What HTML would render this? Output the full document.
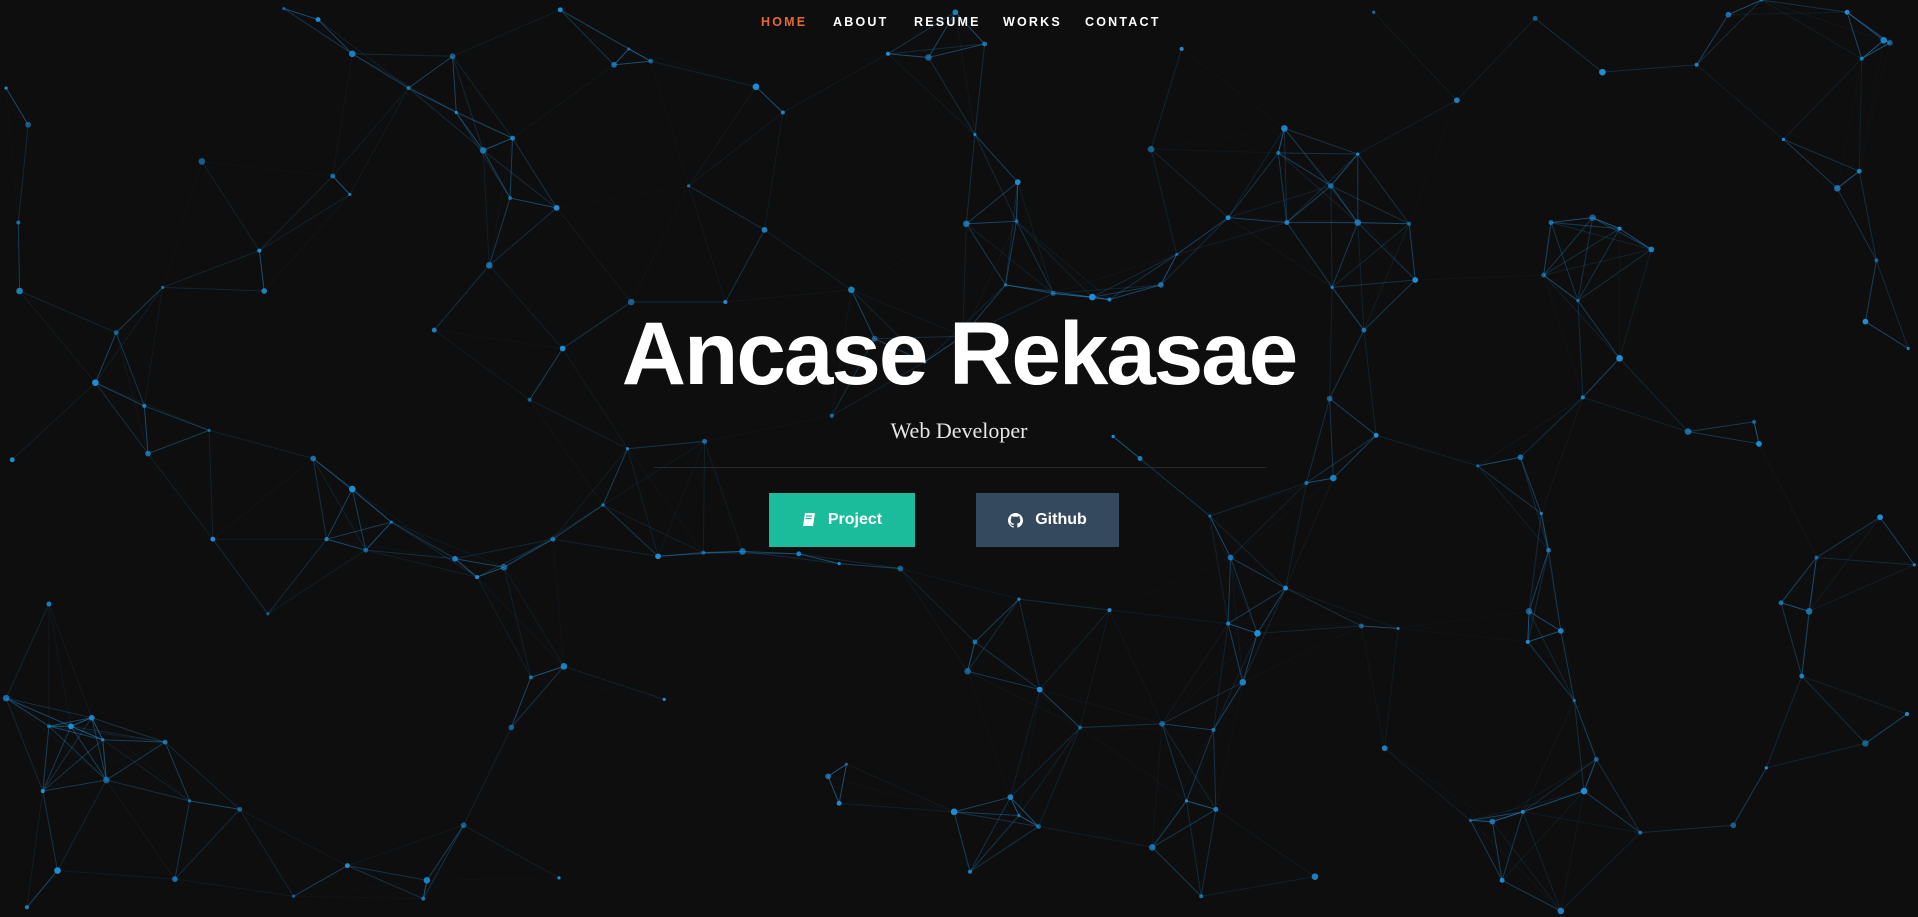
<!DOCTYPE html>
<html><head><meta charset="utf-8"><style>
html,body{margin:0;padding:0;width:1918px;height:917px;overflow:hidden;background:#0e0e0e;font-family:"Liberation Sans",sans-serif;}
#bg{position:absolute;left:0;top:0;width:1918px;height:917px;}
nav{position:absolute;top:15px;left:0;width:1918px;height:16px;}
nav a{position:absolute;top:0;font-size:12.5px;font-weight:bold;letter-spacing:2.2px;color:#fff;text-decoration:none;}
h1{position:absolute;left:0;width:1918px;top:298px;margin:0;text-align:center;color:#fff;font-size:89px;font-weight:bold;letter-spacing:-2px;line-height:110px;}
.sub{position:absolute;left:0;width:1918px;top:418px;text-align:center;color:#e6e6e6;font-family:"Liberation Serif",serif;font-size:22px;}
.line{position:absolute;left:654px;top:467px;width:612px;height:1px;background:#262a2e;}
.btn{position:absolute;top:493px;height:54px;color:#fff;font-weight:bold;font-size:16px;display:flex;align-items:center;justify-content:center;gap:12px;}
</style></head><body>
<svg id="bg" viewBox="0 0 1568 750" preserveAspectRatio="none"><g id="L"></g><g id="N"></g></svg>
<nav>
<a style="left:761px;color:#e8692c">HOME</a>
<a style="left:833px">ABOUT</a>
<a style="left:914px">RESUME</a>
<a style="left:1003px">WORKS</a>
<a style="left:1085px">CONTACT</a>
</nav>
<h1>Ancase Rekasae</h1>
<div class="sub">Web Developer</div>
<div class="line"></div>
<div class="btn" style="left:769px;width:146px;background:#1abc9c;">
<svg width="14" height="16" viewBox="0 0 14 16"><path d="M3 1h10l-2 13H1z" fill="#fff"/><path d="M4 4h6M3.6 6.5h6" stroke="#1abc9c" stroke-width="1.2"/></svg>Project</div>
<div class="btn" style="left:976px;width:143px;background:#34495e;">
<svg width="15" height="15" viewBox="0 0 16 16"><path fill="#fff" d="M8 0C3.6 0 0 3.6 0 8c0 3.5 2.3 6.5 5.5 7.6.4.1.5-.2.5-.4v-1.4c-2.2.5-2.7-1-2.7-1-.4-.9-.9-1.2-.9-1.2-.7-.5.1-.5.1-.5.8.1 1.2.8 1.2.8.7 1.2 1.9.9 2.3.7.1-.5.3-.9.5-1.1-1.8-.2-3.6-.9-3.6-4 0-.9.3-1.6.8-2.1-.1-.2-.4-1 .1-2.1 0 0 .7-.2 2.2.8.6-.2 1.3-.3 2-.3s1.4.1 2 .3c1.5-1 2.2-.8 2.2-.8.4 1.1.2 1.9.1 2.1.5.6.8 1.3.8 2.1 0 3.1-1.9 3.7-3.6 3.9.3.3.5.8.5 1.5v2.2c0 .2.1.5.6.4C13.7 14.5 16 11.5 16 8c0-4.4-3.6-8-8-8z"/></svg>Github</div>
<script>
var P=[232,7,260,16,288,44,334,72,370,46,373,92,419,113,395,123,417,162,455,170,286,159,272,144,165,132,212,205,216,238,133,235,95,272,78,313,118,332,121,371,171,352,10,376,16,238,15,182,23,102,5,72,355,270,400,217,433,327,460,285,513,367,576,361,516,247,593,247,625,188,563,152,532,50,618,71,640,92,502,53,514,40,458,8,696,237,680,340,715,277,756,296,787,275,790,183,831,181,832,149,797,110,805,36,759,47,726,44,781,10,822,233,861,240,893,243,907,245,949,233,962,208,1004,178,1050,105,1045,125,1088,152,1110,126,1052,182,1110,182,1152,183,1157,229,1089,235,1115,270,941,122,966,40,1191,82,1123,10,1255,15,1310,59,1387,53,1413,12,1440,0,1510,10,1540,33,1522,48,1545,35,1458,114,1520,140,1502,154,1534,213,1525,263,1560,285,1268,182,1302,178,1324,187,1350,204,1290,246,1262,225,1324,293,1294,325,1243,374,1208,381,1125,356,1090,391,1068,395,1087,326,910,357,932,375,1380,353,1434,345,1438,363,1260,420,1266,450,1250,500,1249,525,1276,516,1287,573,1305,621,1295,647,1245,664,1220,672,1202,671,1228,720,1276,745,1341,681,1417,675,1444,628,1473,553,1479,500,1485,456,1537,423,1565,462,1456,493,1525,608,1559,584,1132,612,1143,514,1113,512,1028,518,1004,510,1006,456,989,422,1051,481,1016,558,992,597,950,592,970,655,994,662,942,693,883,595,850,564,833,490,797,525,791,549,907,499,826,652,833,667,849,676,780,664,793,713,677,635,692,625,686,657,1075,717,982,733,736,465,686,461,653,453,607,451,575,452,538,455,493,413,452,441,412,464,390,472,372,457,320,427,299,450,288,400,267,441,256,375,219,502,174,441,461,545,434,554,418,595,543,572,40,494,5,571,40,594,58,594,84,605,135,607,87,638,35,647,75,587,155,655,196,662,47,712,22,742,143,719,240,733,284,708,349,720,346,735,379,675,457,718];
var L='',N='',n=P.length/2,D=115;
for(var i=0;i<n;i++){var x=P[2*i],y=P[2*i+1];
for(var j=i+1;j<n;j++){var dx=P[2*j]-x,dy=P[2*j+1]-y,d=Math.sqrt(dx*dx+dy*dy);
if(d<D){L+='<line x1="'+x+'" y1="'+y+'" x2="'+P[2*j]+'" y2="'+P[2*j+1]+'" stroke="#2590d6" stroke-width="0.8" stroke-opacity="'+(0.7*(1-d/D)).toFixed(2)+'"/>';}}
N+='<circle cx="'+x+'" cy="'+y+'" r="'+(1.3+(i*7%5)*0.35)+'" fill="#1e8fd8" fill-opacity="'+(0.6+(i*3%4)*0.13)+'"/>';}
document.getElementById('L').innerHTML=L;document.getElementById('N').innerHTML=N;
</script>
</body></html>
